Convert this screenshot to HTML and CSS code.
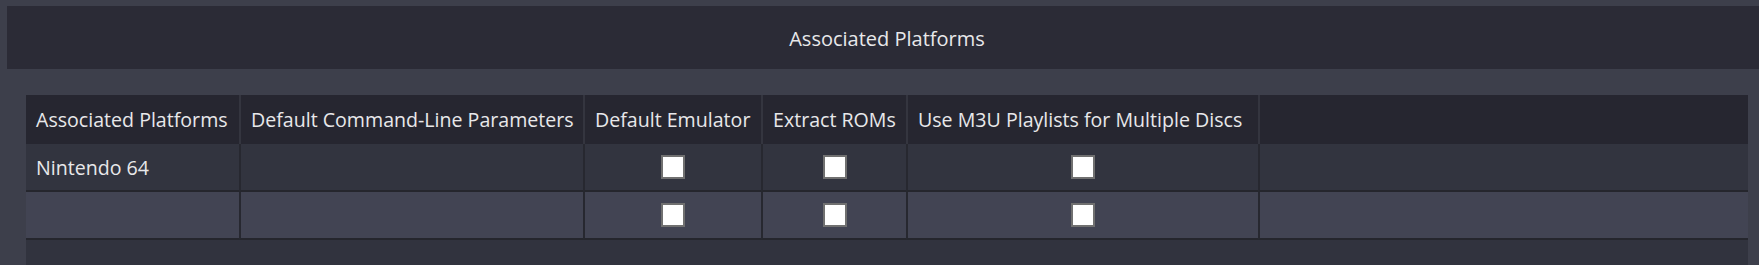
FILE: index.html
```html
<!DOCTYPE html>
<html lang="en">

<head>
    <meta charset="utf-8">
    <title>Associated Platforms</title>
    <link rel="stylesheet" href="styles.css">
</head>

<body>
    <div class="titlebar">Associated Platforms</div>

    <div class="platforms">
        <div class="cell head">Associated Platforms</div>
        <div class="cell head">Default Command-Line Parameters</div>
        <div class="cell head">Default Emulator</div>
        <div class="cell head">Extract ROMs</div>
        <div class="cell head">Use M3U Playlists for Multiple Discs</div>
        <div class="cell head"></div>

        <div class="cell row">Nintendo 64</div>
        <div class="cell row"></div>
        <div class="cell row center"><input type="checkbox"></div>
        <div class="cell row center"><input type="checkbox"></div>
        <div class="cell row center"><input type="checkbox"></div>
        <div class="cell row"></div>

        <div class="cell row alt"></div>
        <div class="cell row alt"></div>
        <div class="cell row alt center"><input type="checkbox"></div>
        <div class="cell row alt center"><input type="checkbox"></div>
        <div class="cell row alt center"><input type="checkbox"></div>
        <div class="cell row alt"></div>

        <div class="filler"></div>
    </div>
</body>

</html>
```
FILE: styles.css
```css
body {
    margin: 0;
    padding: 0;
    background-color: #3d3f4b;
    font-family: 'Open Sans', sans-serif;
    font-size: 20px;
    color: #e8e8ea;
}

.titlebar {
    display: flex;
    align-items: center;
    justify-content: center;
    height: 62px;
    margin: 6px 0 0 7px;
    padding: 1px 0 0 8px;
    background-color: #2b2b36;
}

.platforms {
    display: grid;
    grid-template-columns: 213px 344px 178px 145px 352px 1fr;
    margin: 26px 11px 0 26px;
    background-color: #31333e;
}

.cell {
    display: flex;
    align-items: center;
    padding: 0 10px;
    white-space: nowrap;
    border-left: 2px solid #272830;
}

.cell:nth-child(6n+1) {
    border-left: none;
}

.head {
    height: 49px;
    font-size: 19.6px;
    background-color: #262630;
    border-left-color: #34353f;
}

.row {
    height: 46px;
    font-size: 19.6px;
    background-color: #32343f;
    border-bottom: 2px solid #25262d;
}

.alt {
    background-color: #424453;
}

.center {
    justify-content: center;
}

input[type="checkbox"] {
    appearance: none;
    width: 24px;
    height: 24px;
    margin: 0;
    box-sizing: border-box;
    border: 2px solid #707070;
    background-color: #ffffff;
}

.filler {
    grid-column: 1 / -1;
    height: 25px;
}
```
